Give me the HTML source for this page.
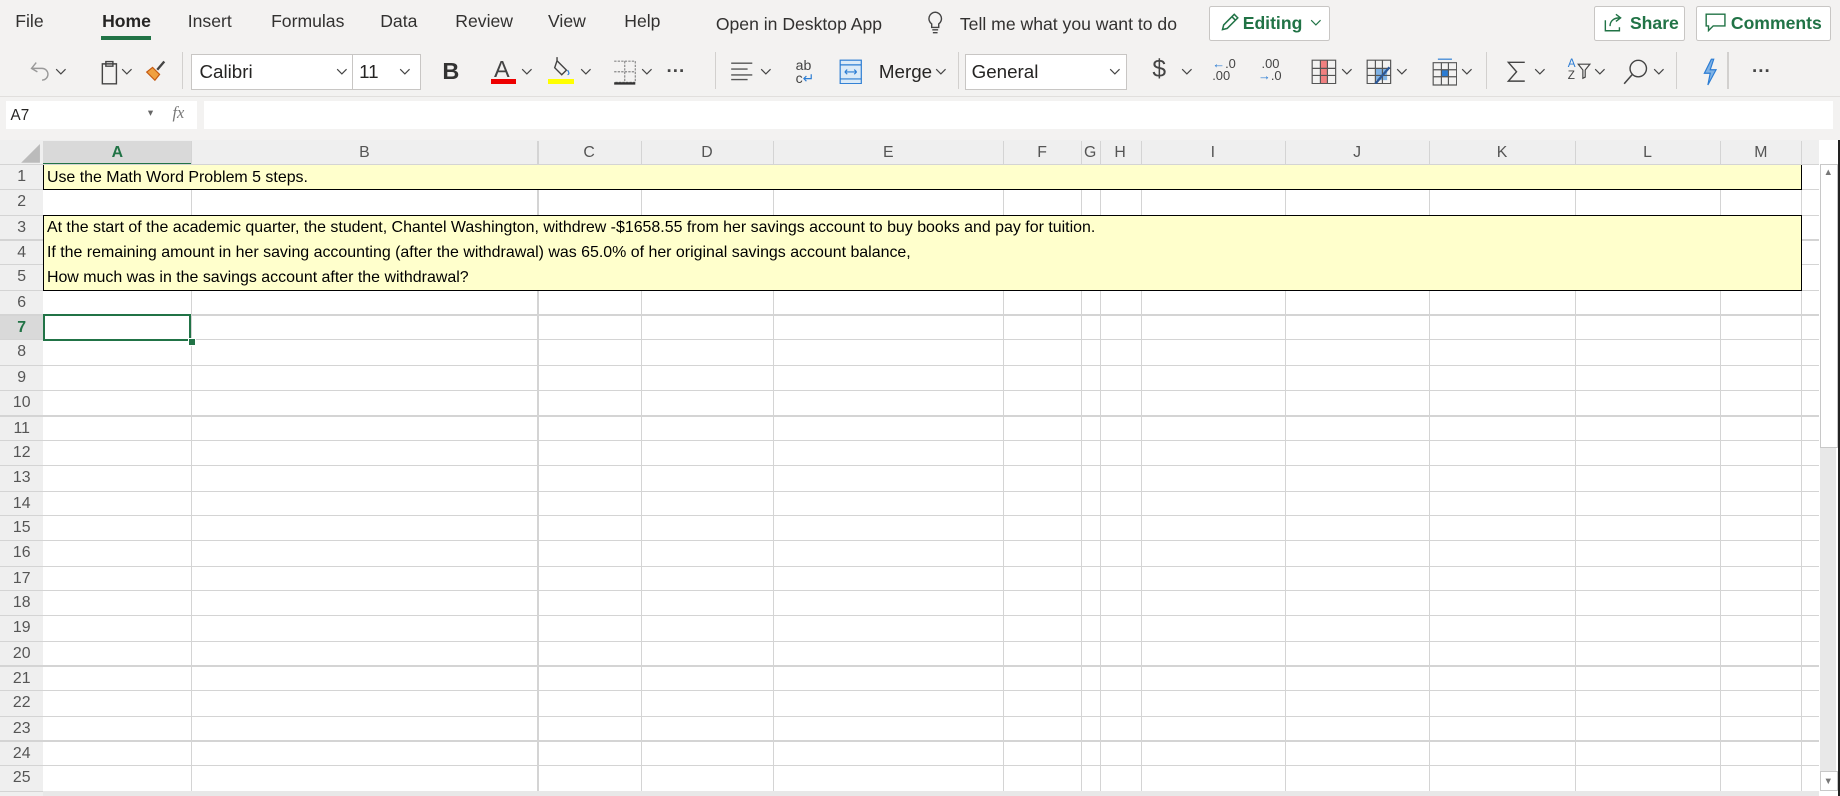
<!DOCTYPE html>
<html><head><meta charset="utf-8"><style>
html,body{margin:0;padding:0;background:#f3f2f1;overflow:hidden;width:1840px;height:796px}
#w{zoom:1.17347;width:1568px;height:679px;position:relative;font-family:"Liberation Sans",sans-serif;color:#252423}
.a{position:absolute;white-space:nowrap}
.tab{position:absolute;top:9px;font-size:15px;color:#323130}
.ic{position:absolute}
.cv{position:absolute;width:10px;height:6px}
.gl{position:absolute;background:#d4d4d4}
.rh{position:absolute;left:0;width:37px;text-align:center;font-size:13.5px;color:#555;background:#efefef}
.ch{position:absolute;top:120px;height:21px;line-height:21px;text-align:center;font-size:13.5px;color:#555}
.ct{position:absolute;font-size:13.6px;color:#000;left:40px}
.sep{position:absolute;top:44px;width:1px;height:32px;background:#d2d0ce}
</style></head><body><div id="w">
<div class="tab" style="left:13px">File</div>
<div class="tab" style="left:87px;font-weight:bold;color:#252423">Home</div>
<div class="a" style="left:86px;top:31px;width:43px;height:3px;background:#217346"></div>
<div class="tab" style="left:160px">Insert</div>
<div class="tab" style="left:231px">Formulas</div>
<div class="tab" style="left:324px">Data</div>
<div class="tab" style="left:388px">Review</div>
<div class="tab" style="left:467px">View</div>
<div class="tab" style="left:532px">Help</div>
<div class="tab" style="left:610px;top:12px">Open in Desktop App</div>
<svg class="ic" style="left:790px;top:9px" width="14" height="20" viewBox="0 0 14 20"><path d="M7 1a5.5 5.5 0 0 0-3 10v3h6v-3A5.5 5.5 0 0 0 7 1zM4.5 16h5M5 18.5h4" fill="none" stroke="#444" stroke-width="1.2"/></svg>
<div class="tab" style="left:818px;top:12px">Tell me what you want to do</div>
<div class="a" style="left:1030px;top:5px;width:102px;height:28px;border:1px solid #c8c6c4;background:#fff;border-radius:2px"></div>
<svg class="ic" style="left:1039px;top:10px" width="18" height="18" viewBox="0 0 18 18"><path d="M3 15l1-4L13 2l3 3-9 9zM11 4l3 3" fill="none" stroke="#217346" stroke-width="1.3"/></svg>
<div class="a" style="left:1059px;top:11px;font-size:15px;color:#217346;font-weight:bold">Editing</div>
<svg class="cv" style="left:1116px;top:16px" viewBox="0 0 10 6"><path d="M1 1l4 4 4-4" fill="none" stroke="#217346"/></svg>
<div class="a" style="left:1358px;top:5px;width:76px;height:28px;border:1px solid #c8c6c4;background:#fff;border-radius:2px"></div>
<svg class="ic" style="left:1366px;top:10px" width="18" height="18" viewBox="0 0 18 18"><path d="M2 7v9h12v-3M6 12c0-5 4-7 8-7M11 2l4 3-4 3" fill="none" stroke="#217346" stroke-width="1.2"/></svg>
<div class="a" style="left:1389px;top:11px;font-size:15px;color:#217346;font-weight:bold">Share</div>
<div class="a" style="left:1445px;top:5px;width:114px;height:28px;border:1px solid #c8c6c4;background:#fff;border-radius:2px"></div>
<svg class="ic" style="left:1453px;top:11px" width="18" height="16" viewBox="0 0 18 16"><path d="M1 1h16v10H7l-4 4v-4H1z" fill="none" stroke="#217346" stroke-width="1.2"/></svg>
<div class="a" style="left:1475px;top:11px;font-size:15px;color:#217346;font-weight:bold">Comments</div>
<!-- ribbon -->
<svg class="ic" style="left:24px;top:50px" width="22" height="22" viewBox="0 0 22 22"><path d="M7 3L3 8l5 3M3 8h9a5 5 0 0 1 0 10" fill="none" stroke="#999" stroke-width="1.2"/></svg>
<svg class="cv" style="left:47px;top:58px" viewBox="0 0 10 6"><path d="M1 1l4 4 4-4" fill="none" stroke="#444"/></svg>
<svg class="ic" style="left:85px;top:49px" width="16" height="24" viewBox="0 0 16 24"><path d="M2 5h12v17H2zM5 3h6v4H5z" fill="none" stroke="#444" stroke-width="1.2"/></svg>
<svg class="cv" style="left:103px;top:58px" viewBox="0 0 10 6"><path d="M1 1l4 4 4-4" fill="none" stroke="#444"/></svg>
<svg class="ic" style="left:121px;top:49px" width="22" height="22" viewBox="0 0 22 22"><path d="M4 12l7 7 4-5-6-6z" fill="#f0a040" stroke="#c55a11"/><path d="M13 10l6-7" stroke="#444" stroke-width="2"/></svg>
<div class="sep" style="left:155px"></div>
<div class="a" style="left:163px;top:46px;width:194px;height:29px;border:1px solid #c8c6c4;background:#fff"></div>
<div class="a" style="left:300px;top:46px;width:1px;height:31px;background:#c8c6c4"></div>
<div class="a" style="left:170px;top:52px;font-size:16px;color:#252423">Calibri</div>
<svg class="cv" style="left:286px;top:58px" viewBox="0 0 10 6"><path d="M1 1l4 4 4-4" fill="none" stroke="#444"/></svg>
<div class="a" style="left:306px;top:52px;font-size:16px">11</div>
<svg class="cv" style="left:340px;top:58px" viewBox="0 0 10 6"><path d="M1 1l4 4 4-4" fill="none" stroke="#444"/></svg>
<div class="a" style="left:377px;top:49px;font-size:20px;font-weight:bold;color:#333">B</div>
<div class="a" style="left:421px;top:48px;font-size:20px;color:#444">A</div>
<div class="a" style="left:418px;top:67px;width:22px;height:5px;background:#e00"></div>
<svg class="cv" style="left:444px;top:58px" viewBox="0 0 10 6"><path d="M1 1l4 4 4-4" fill="none" stroke="#444"/></svg>
<svg class="ic" style="left:469px;top:48px" width="22" height="20" viewBox="0 0 22 20"><path d="M6 4l8 8-4 4-6-6zM6 4V1" fill="none" stroke="#444" stroke-width="1.2"/><path d="M15 12c1 2 2 3 0 4" stroke="#2b7cd3" fill="none"/></svg>
<div class="a" style="left:467px;top:67px;width:22px;height:5px;background:#ff0"></div>
<svg class="cv" style="left:494px;top:58px" viewBox="0 0 10 6"><path d="M1 1l4 4 4-4" fill="none" stroke="#444"/></svg>
<svg class="ic" style="left:522px;top:51px" width="20" height="22" viewBox="0 0 20 22"><path d="M1 1h18v18H1M10 1v18M1 10h18" fill="none" stroke="#888" stroke-dasharray="2 1"/><path d="M1 20h18" stroke="#333" stroke-width="2"/></svg>
<svg class="cv" style="left:546px;top:58px" viewBox="0 0 10 6"><path d="M1 1l4 4 4-4" fill="none" stroke="#444"/></svg>
<div class="a" style="left:568px;top:51px;font-size:16px;font-weight:bold;color:#444">···</div>
<div class="sep" style="left:609px"></div>
<svg class="ic" style="left:622px;top:53px" width="20" height="16" viewBox="0 0 20 16"><path d="M1 1h18M1 6h14M1 11h18M1 15h14" stroke="#555" stroke-width="1.2"/></svg>
<svg class="cv" style="left:648px;top:58px" viewBox="0 0 10 6"><path d="M1 1l4 4 4-4" fill="none" stroke="#444"/></svg>
<div class="a" style="left:678px;top:50px;font-size:12px;line-height:11px;color:#444">ab<br>c<span style="color:#2b7cd3">↵</span></div>
<svg class="ic" style="left:715px;top:50px" width="20" height="22" viewBox="0 0 20 22"><rect x="1" y="1" width="18" height="20" fill="#dbeaf7" stroke="#2b7cd3"/><path d="M1 5h18M1 17h18" stroke="#2b7cd3"/><path d="M5 11h10M5 11l2-2M5 11l2 2M15 11l-2-2M15 11l-2 2" stroke="#2b7cd3"/></svg>
<div class="a" style="left:749px;top:52px;font-size:16px">Merge</div>
<svg class="cv" style="left:797px;top:58px" viewBox="0 0 10 6"><path d="M1 1l4 4 4-4" fill="none" stroke="#444"/></svg>
<div class="sep" style="left:816px"></div>
<div class="a" style="left:822px;top:46px;width:137px;height:29px;border:1px solid #c8c6c4;background:#fff"></div>
<div class="a" style="left:828px;top:52px;font-size:16px">General</div>
<svg class="cv" style="left:945px;top:58px" viewBox="0 0 10 6"><path d="M1 1l4 4 4-4" fill="none" stroke="#444"/></svg>
<div class="a" style="left:982px;top:48px;font-size:21px;color:#444">$</div>
<svg class="cv" style="left:1006px;top:58px" viewBox="0 0 10 6"><path d="M1 1l4 4 4-4" fill="none" stroke="#444"/></svg>
<div class="a" style="left:1033px;top:49px;font-size:11px;line-height:11px;color:#444"><span style="color:#2b7cd3">←</span>.0<br>.00</div>
<div class="a" style="left:1072px;top:49px;font-size:11px;line-height:11px;color:#444">&nbsp;.00<br><span style="color:#2b7cd3">→</span>.0</div>
<svg class="ic" style="left:1117px;top:50px" width="22" height="22" viewBox="0 0 22 22"><rect x="8" y="1" width="6" height="20" fill="#f08080"/><path d="M1 1h20v20H1zM1 8h20M1 14h20M8 1v20M14 1v20" fill="none" stroke="#555"/></svg>
<svg class="cv" style="left:1143px;top:58px" viewBox="0 0 10 6"><path d="M1 1l4 4 4-4" fill="none" stroke="#444"/></svg>
<svg class="ic" style="left:1164px;top:50px" width="22" height="22" viewBox="0 0 22 22"><rect x="8" y="8" width="10" height="10" fill="#7fb2e5"/><path d="M1 1h20v20H1zM1 8h20M1 14h20M8 1v20M14 1v20" fill="none" stroke="#555"/><path d="M8 21l12-14" stroke="#2b5797" stroke-width="2"/></svg>
<svg class="cv" style="left:1190px;top:58px" viewBox="0 0 10 6"><path d="M1 1l4 4 4-4" fill="none" stroke="#444"/></svg>
<svg class="ic" style="left:1220px;top:49px" width="22" height="24" viewBox="0 0 22 24"><rect x="8" y="10" width="6" height="6" fill="#2b7cd3"/><path d="M1 4h20v19H1zM1 10h20M1 16h20M8 4v19M14 4v19" fill="none" stroke="#555"/><path d="M5 1h12" stroke="#2b7cd3"/></svg>
<svg class="cv" style="left:1245px;top:58px" viewBox="0 0 10 6"><path d="M1 1l4 4 4-4" fill="none" stroke="#444"/></svg>
<div class="sep" style="left:1266px"></div>
<svg class="ic" style="left:1283px;top:51px" width="18" height="20" viewBox="0 0 18 20"><path d="M16 2H2l7 8-7 8h14" fill="none" stroke="#444" stroke-width="1.2"/></svg>
<svg class="cv" style="left:1307px;top:58px" viewBox="0 0 10 6"><path d="M1 1l4 4 4-4" fill="none" stroke="#444"/></svg>
<div class="a" style="left:1336px;top:49px;font-size:10px;line-height:11px;color:#2b7cd3">A<br><span style="color:#444">Z</span></div>
<svg class="ic" style="left:1344px;top:54px" width="12" height="14" viewBox="0 0 12 14"><path d="M1 1h10L7 6v6l-2 1V6z" fill="none" stroke="#444"/></svg>
<svg class="cv" style="left:1358px;top:58px" viewBox="0 0 10 6"><path d="M1 1l4 4 4-4" fill="none" stroke="#444"/></svg>
<svg class="ic" style="left:1383px;top:49px" width="22" height="24" viewBox="0 0 22 24"><circle cx="13" cy="9" r="7" fill="none" stroke="#444" stroke-width="1.2"/><path d="M8 14L1 22" stroke="#444" stroke-width="1.3"/></svg>
<svg class="cv" style="left:1409px;top:58px" viewBox="0 0 10 6"><path d="M1 1l4 4 4-4" fill="none" stroke="#444"/></svg>
<div class="sep" style="left:1428px"></div>
<svg class="ic" style="left:1450px;top:49px" width="14" height="24" viewBox="0 0 14 24"><path d="M8 1L2 13h5L5 23l7-13H7l3-9z" fill="#7fb2e5" stroke="#2b7cd3"/></svg>
<div class="sep" style="left:1472px"></div>
<div class="a" style="left:1493px;top:51px;font-size:16px;font-weight:bold;color:#444">···</div>
<!-- formula bar -->
<div class="a" style="left:0;top:82px;width:1568px;height:1px;background:#e1dfdd"></div>
<div class="a" style="left:5px;top:86px;width:152px;height:24px;background:#fff"></div>
<div class="a" style="left:9px;top:91px;font-size:13px">A7</div>
<div class="a" style="left:126px;top:91px;font-size:9px;color:#666">▾</div>
<div class="a" style="left:141px;top:86px;width:27px;height:24px;background:#fff"></div>
<div class="a" style="left:147px;top:88px;font-size:14px;font-style:italic;font-family:'Liberation Serif',serif;color:#777">fx</div>
<div class="a" style="left:174px;top:86px;width:1388px;height:24px;background:#fff"></div>
<!-- grid area -->
<div class="a" style="left:0;top:119px;width:1550px;height:560px;background:#fff"></div>
<div class="a" style="left:0;top:119px;width:1550px;height:22px;background:#efefef"></div>
<div class="a" style="left:0;top:119px;width:37px;height:560px;background:#efefef"></div>
<svg class="ic" style="left:17px;top:123px" width="18" height="16"><path d="M17 0v16H1z" fill="#bbb"/></svg>
<div class="a" style="left:37px;top:120px;width:126px;height:21px;background:#d9d9d9"></div>
<div class="a" style="left:37px;top:139px;width:126px;height:2px;background:#217346"></div>
<div id="grid"></div>
<div class="a" style="left:1550px;top:119px;width:18px;height:560px;background:#fff"></div>
<div class="a" style="left:1551px;top:140px;width:14px;height:240px;background:#fff;border:1px solid #c8c8c8"></div>
<div class="a" style="left:1551px;top:382px;width:14px;height:275px;background:#e8e8e8"></div>
<div class="a" style="left:1554px;top:142px;font-size:8px;color:#777">▲</div>
<div class="a" style="left:1551px;top:657px;width:14px;height:15px;border:1px solid #c8c8c8;background:#fff"></div>
<div class="a" style="left:1554px;top:661px;font-size:8px;color:#777">▼</div>
<div class="a" style="left:1566px;top:119px;width:2px;height:560px;background:#222"></div>
<div class="a" style="left:37px;top:674px;width:1513px;height:5px;background:#e8e8e8"></div>
<script>
var g=document.getElementById('grid'),h='';
var cols=[37,163,458,546,659,855,921,937,972,1095,1218,1342,1466,1535];
var names='ABCDEFGHIJKLM';
function rt(r){return Math.round(141+(r-1)*21.35);}
for(var i=1;i<cols.length;i++){h+='<div class="gl" style="left:'+cols[i]+'px;top:120px;width:1px;height:554px"></div>';}
for(var i=0;i<13;i++){var s='';if(i==0)s='color:#217346;font-weight:bold;';
h+='<div class="ch" style="left:'+cols[i]+'px;width:'+(cols[i+1]-cols[i])+'px;'+s+'">'+names[i]+'</div>';}
for(var r=1;r<=25;r++){var t=rt(r),b=rt(r+1);h+='<div class="gl" style="left:0;top:'+(b-1)+'px;width:1550px;height:1px"></div>';
var s=r==7?'background:#d9d9d9;color:#217346;font-weight:bold;':'';
h+='<div class="rh" style="top:'+t+'px;height:'+(b-t-1)+'px;line-height:'+(b-t-1)+'px;'+s+'">'+r+'</div>';}
h+='<div class="gl" style="left:0;top:140px;width:1550px;height:1px"></div>';
h+='<div class="a" style="left:37px;top:'+rt(1)+'px;width:1497px;height:'+(rt(2)-rt(1)-1)+'px;background:#ffffcc;border:1px solid #000;border-top:none"></div>';
h+='<div class="a" style="left:37px;top:'+(rt(3)-1)+'px;width:1497px;height:'+(rt(6)-rt(3)-1)+'px;background:#ffffcc;border:1px solid #000"></div>';
h+='<div class="ct" style="top:'+(rt(1)+3)+'px">Use the Math Word Problem 5 steps.</div>';
var tx=['At the start of the academic quarter, the student, Chantel Washington, withdrew -$1658.55 from her savings account to buy books and pay for tuition.','If the remaining amount in her saving accounting (after the withdrawal) was 65.0% of her original savings account balance,','How much was in the savings account after the withdrawal?'];
for(var k=0;k<3;k++)h+='<div class="ct" style="top:'+(rt(3+k)+3)+'px">'+tx[k]+'</div>';
h+='<div class="a" style="left:37px;top:'+(rt(7)-1)+'px;width:122px;height:19px;border:2px solid #217346"></div>';
h+='<div class="a" style="left:160px;top:'+(rt(7)+19)+'px;width:5px;height:5px;background:#217346;border:1px solid #fff"></div>';
g.innerHTML=h;
</script>
</div></body></html>
